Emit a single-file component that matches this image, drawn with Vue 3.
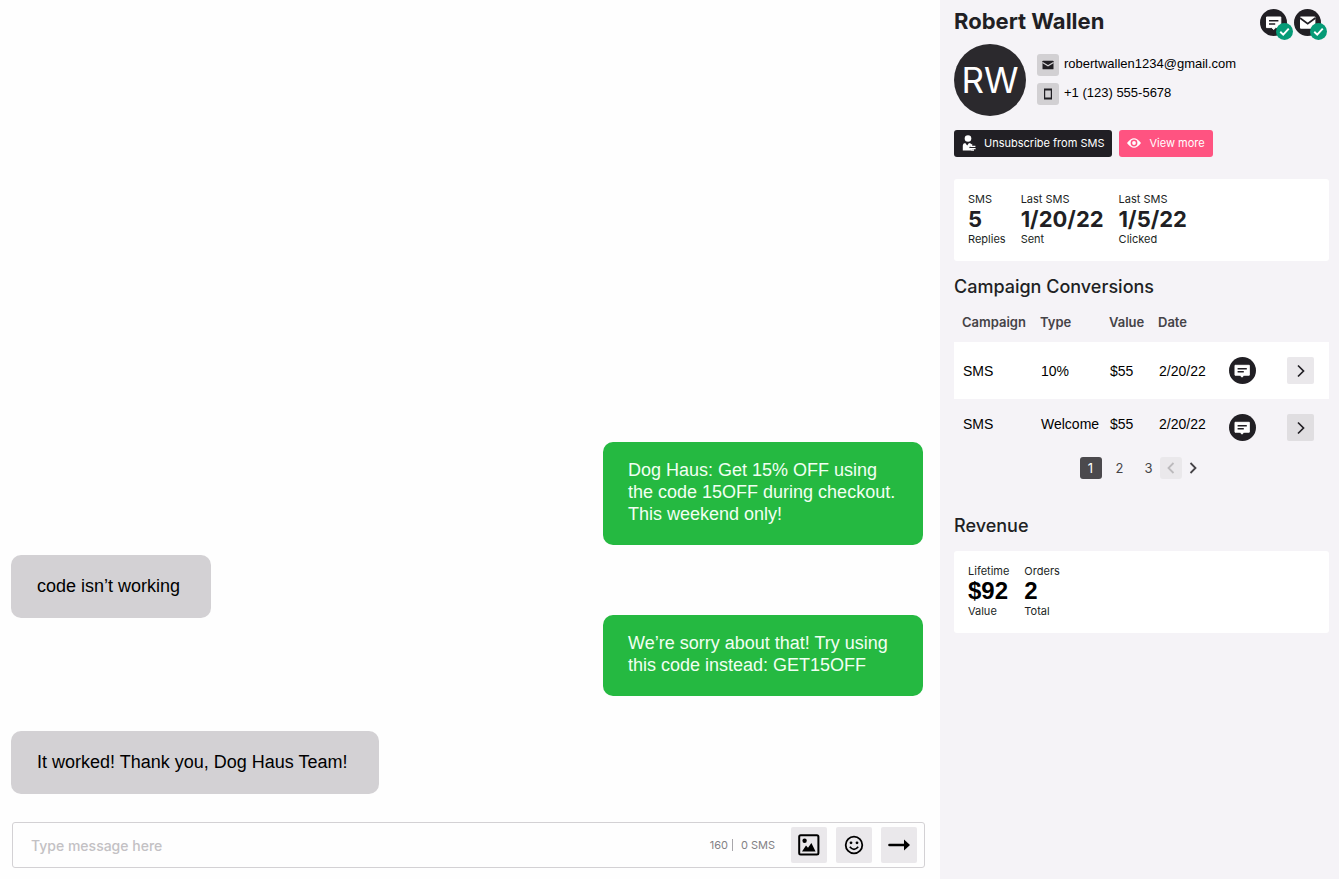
<script setup>
import { ref } from 'vue'

const draft = ref('')
const page = ref(1)

const messages = [
  { id: 1, from: 'store', text: 'Dog Haus: Get 15% OFF using the code 15OFF during checkout. This weekend only!' },
  { id: 2, from: 'customer', text: 'code isn’t working' },
  { id: 3, from: 'store', text: 'We’re sorry about that! Try using this code instead: GET15OFF' },
  { id: 4, from: 'customer', text: 'It worked! Thank you, Dog Haus Team!', late: true },
]

const smsStats = [
  { top: 'SMS', value: '5', bottom: 'Replies' },
  { top: 'Last SMS', value: '1/20/22', bottom: 'Sent' },
  { top: 'Last SMS', value: '1/5/22', bottom: 'Clicked' },
]

const revenueStats = [
  { top: 'Lifetime', value: '$92', bottom: 'Value' },
  { top: 'Orders', value: '2', bottom: 'Total' },
]

const conversions = [
  { id: 1, campaign: 'SMS', type: '10%', value: '$55', date: '2/20/22' },
  { id: 2, campaign: 'SMS', type: 'Welcome', value: '$55', date: '2/20/22' },
]
</script>

<template>
  <div class="layout">
    <main class="chat">
      <div class="messages">
        <p
          v-for="message in messages"
          :key="message.id"
          class="bubble"
          :class="[message.from, { late: message.late }]"
        >{{ message.text }}</p>
      </div>

      <form class="composer" @submit.prevent>
        <input v-model="draft" type="text" class="composer-input" placeholder="Type message here" aria-label="Type message here" />
        <div class="counter">
          <span>160</span>
          <span class="counter-sms">0 SMS</span>
        </div>
        <div class="composer-actions">
          <button type="button" class="tool-btn" aria-label="Add image">
            <svg width="22" height="22" viewBox="0 0 22 22">
              <rect x="1.2" y="1.2" width="19.2" height="19.2" rx="1.5" fill="none" stroke="currentColor" stroke-width="2" />
              <circle cx="6.6" cy="6.8" r="2.2" fill="currentColor" />
              <path d="M4 17.5 L8 11.5 L10 13.8 L13.4 9 L17.6 17.5 Z" fill="currentColor" />
            </svg>
          </button>
          <button type="button" class="tool-btn" aria-label="Add emoji">
            <svg width="20" height="20" viewBox="0 0 20 20">
              <circle cx="10" cy="10" r="8.3" fill="none" stroke="currentColor" stroke-width="1.8" />
              <circle cx="7" cy="7.8" r="1.4" fill="currentColor" />
              <circle cx="13" cy="7.8" r="1.4" fill="currentColor" />
              <path d="M5.8 11.8 Q10 17 14.2 11.8" fill="none" stroke="currentColor" stroke-width="1.7" />
            </svg>
          </button>
          <button type="submit" class="tool-btn" aria-label="Send">
            <svg width="24" height="14" viewBox="0 0 24 14">
              <path d="M2.5 7 H18" fill="none" stroke="currentColor" stroke-width="2.6" stroke-linecap="round" />
              <path d="M17 1.5 L23 7 L17 12.5 Z" fill="currentColor" />
            </svg>
          </button>
        </div>
      </form>
    </main>

    <aside class="profile">
      <header class="profile-head">
        <h1 class="name">Robert Wallen</h1>
        <div class="channels">
          <span class="channel">
            <svg class="channel-icon" viewBox="0 0 27 27">
              <circle cx="13.5" cy="13.5" r="13.5" fill="#211f24" />
              <path d="M6.5 8 H20.8 V18.6 H15.6 L13.7 20.6 L11.8 18.6 H6.5 Z" fill="#fff" stroke="#fff" stroke-width="1" stroke-linejoin="round" />
              <path d="M9 11.7 H18.4 M9 14.9 H15.2" stroke="#211f24" stroke-width="1.5" />
            </svg>
            <svg class="check" viewBox="0 0 16 16">
              <circle cx="8" cy="8" r="8" fill="#069b77" />
              <path d="M4 8.2 L6.8 11 L12 5.2" fill="none" stroke="#fff" stroke-width="1.8" />
            </svg>
          </span>
          <span class="channel">
            <svg class="channel-icon" viewBox="0 0 27 27">
              <circle cx="13.5" cy="13.5" r="13.5" fill="#211f24" />
              <rect x="6" y="7.5" width="15.4" height="12.2" rx="1" fill="#fff" />
              <path d="M6 9 L13.7 14.6 L21.4 9" fill="none" stroke="#211f24" stroke-width="1.7" />
            </svg>
            <svg class="check" viewBox="0 0 16 16">
              <circle cx="8" cy="8" r="8" fill="#069b77" />
              <path d="M4 8.2 L6.8 11 L12 5.2" fill="none" stroke="#fff" stroke-width="1.8" />
            </svg>
          </span>
        </div>
      </header>

      <section class="contact">
        <div class="avatar">RW</div>
        <ul class="contact-list">
          <li>
            <span class="contact-icon">
              <svg width="12" height="10" viewBox="0 0 12 10">
                <rect x="0.5" y="0.7" width="11" height="8.6" rx="0.6" fill="#211f24" />
                <path d="M0.5 2.4 L6 5.8 L11.5 2.4" fill="none" stroke="#d2d0d3" stroke-width="1.2" />
              </svg>
            </span>
            robertwallen1234@gmail.com
          </li>
          <li>
            <span class="contact-icon">
              <svg width="10" height="12" viewBox="0 0 10 12">
                <path d="M1 0.5 H9 V11.5 H1 Z M2.2 2.4 V9.6 H7.8 V2.4 Z" fill="#211f24" fill-rule="evenodd" />
              </svg>
            </span>
            +1 (123) 555-5678
          </li>
        </ul>
      </section>

      <div class="actions">
        <button type="button" class="btn btn-dark">
          <svg width="14" height="16" viewBox="0 0 14 16">
            <circle cx="6" cy="3.5" r="3.3" fill="#fff" />
            <path d="M0.8 15.5 V10.5 Q0.8 8.2 3.2 8 L5.2 10.6 L7 8 Q9 8.2 9.8 9.4 L7 12 L9.2 15.5 Z" fill="#fff" />
            <path d="M7.4 12 L9.6 10 V11.4 H13.4 M13.6 13.6 H8.2 L9.6 15.2 H12" fill="none" stroke="#fff" stroke-width="1.2" />
          </svg>
          Unsubscribe from SMS
        </button>
        <button type="button" class="btn btn-pink">
          <svg width="14" height="12" viewBox="0 0 14 12">
            <path d="M0 6 Q7 -3.6 14 6 Q7 15.6 0 6 Z" fill="#fff" />
            <circle cx="7" cy="6" r="3.4" fill="#ff5381" />
            <circle cx="7" cy="6" r="1.9" fill="#fff" />
          </svg>
          View more
        </button>
      </div>

      <dl class="card">
        <div v-for="stat in smsStats" :key="stat.bottom" class="stat">
          <dt>{{ stat.top }}</dt>
          <dd class="stat-value">{{ stat.value }}</dd>
          <dd>{{ stat.bottom }}</dd>
        </div>
      </dl>

      <h2 class="section-title">Campaign Conversions</h2>
      <table class="conversions">
        <colgroup>
          <col class="col-campaign" />
          <col class="col-type" />
          <col class="col-value" />
          <col class="col-date" />
          <col />
          <col />
        </colgroup>
        <thead>
          <tr>
            <th>Campaign</th>
            <th>Type</th>
            <th>Value</th>
            <th>Date</th>
            <th></th>
            <th></th>
          </tr>
        </thead>
        <tbody>
          <tr v-for="row in conversions" :key="row.id">
            <td class="text-cell">{{ row.campaign }}</td>
            <td class="text-cell">{{ row.type }}</td>
            <td class="text-cell">{{ row.value }}</td>
            <td class="text-cell">{{ row.date }}</td>
            <td class="icon-cell">
              <svg class="channel-icon" viewBox="0 0 27 27">
                <circle cx="13.5" cy="13.5" r="13.5" fill="#211f24" />
                <path d="M6 8.3 H20.3 V18.2 H15 L13 20.2 L11 18.2 H6 Z" fill="#fff" stroke="#fff" stroke-width="1" stroke-linejoin="round" />
                <path d="M8.6 11.8 H17.8 M8.6 14.7 H14.8" stroke="#211f24" stroke-width="1.4" />
              </svg>
            </td>
            <td class="open-cell">
              <button type="button" class="open-btn" aria-label="Open conversion">
                <svg width="8" height="14" viewBox="0 0 8 14">
                  <path d="M1 1.5 L6.5 7 L1 12.5" fill="none" stroke="currentColor" stroke-width="1.7" />
                </svg>
              </button>
            </td>
          </tr>
        </tbody>
      </table>

      <nav class="pager" aria-label="Conversions pages">
        <div class="pages">
          <button
            v-for="n in 3"
            :key="n"
            type="button"
            class="page-btn"
            :class="{ active: page === n }"
            @click="page = n"
          >{{ n }}</button>
        </div>
        <button type="button" class="step-btn" :disabled="page === 1" aria-label="Previous page" @click="page--">
          <svg width="8" height="12" viewBox="0 0 8 12">
            <path d="M6.5 1 L1.5 6 L6.5 11" fill="none" stroke="currentColor" stroke-width="1.8" />
          </svg>
        </button>
        <button type="button" class="step-btn" :disabled="page === 3" aria-label="Next page" @click="page++">
          <svg width="8" height="12" viewBox="0 0 8 12">
            <path d="M1.5 1 L6.5 6 L1.5 11" fill="none" stroke="currentColor" stroke-width="1.8" />
          </svg>
        </button>
      </nav>

      <h2 class="section-title">Revenue</h2>
      <dl class="card revenue">
        <div v-for="stat in revenueStats" :key="stat.bottom" class="stat">
          <dt>{{ stat.top }}</dt>
          <dd class="stat-value">{{ stat.value }}</dd>
          <dd>{{ stat.bottom }}</dd>
        </div>
      </dl>
    </aside>
  </div>
</template>

<style>
body {
  margin: 0;
}
</style>

<style scoped>
.layout {
  display: grid;
  grid-template-columns: minmax(0, 1fr) 399px;
  min-height: 100vh;
  background: #fefefe;
  color: #211f24;
  font-family: Inter, sans-serif;
}

button {
  display: flex;
  align-items: center;
  justify-content: center;
  padding: 0;
  border: 0;
  font-family: inherit;
  cursor: pointer;
}

svg {
  display: block;
  flex: none;
}

.chat {
  display: flex;
  flex-direction: column;
  justify-content: flex-end;
  gap: 28px;
  box-sizing: border-box;
  padding: 11px 15px 11px 12px;
}

.messages {
  display: flex;
  flex-direction: column;
  margin: 0 2px 0 -1px;
}

.bubble {
  box-sizing: border-box;
  max-width: 380px;
  margin: 0;
  border-radius: 10px;
  font: 18px/22px "Liberation Sans", Arial, sans-serif;
}

.store {
  align-self: flex-end;
  width: 320px;
  margin-top: -3px;
  padding: 17px 25px 20px;
  background: #25b941;
  color: #f1fff2;
}

.customer {
  align-self: flex-start;
  margin-top: 10px;
  padding: 20px 31px 21px 26px;
  background: #d3d1d4;
  color: #000;
}

.late {
  margin-top: 35px;
}

.composer {
  display: flex;
  align-items: center;
  box-sizing: border-box;
  height: 46px;
  padding: 0 7px 0 18px;
  border: 1px solid #d3d1d4;
  border-radius: 3px;
}

.composer-input {
  flex: 1;
  min-width: 0;
  padding: 1px 0 0;
  border: 0;
  outline: 0;
  background: none;
  color: #211f24;
  font: 500 14px/20px Inter, sans-serif;
}

.composer-input::placeholder {
  color: #c3c1c4;
  opacity: 1;
}

.counter {
  display: flex;
  color: #838185;
  font-size: 11px;
  line-height: 12px;
}

.counter-sms {
  margin-left: 4px;
  padding-left: 8px;
  border-left: 1px solid #a9a7ab;
}

.composer-actions {
  display: flex;
  gap: 9px;
  margin-left: 16px;
}

.tool-btn {
  width: 36px;
  height: 36px;
  border-radius: 2px;
  background: #eae8eb;
  color: #000;
}

.profile {
  box-sizing: border-box;
  padding: 8px 10px 20px 14px;
  background: #f5f3f7;
}

.profile-head {
  display: flex;
  justify-content: space-between;
  height: 36px;
}

.name {
  margin: 0;
  font-size: 22px;
  font-weight: 700;
  line-height: 26px;
}

.channels {
  display: flex;
  gap: 7px;
  margin: 1px 8px 0 0;
}

.channel {
  position: relative;
  width: 27px;
  height: 27px;
}

.channel-icon {
  width: 27px;
  height: 27px;
}

.check {
  position: absolute;
  right: -6px;
  bottom: -4px;
  width: 17px;
  height: 17px;
}

.contact {
  display: flex;
  gap: 11px;
}

.avatar {
  display: flex;
  align-items: center;
  justify-content: center;
  width: 72px;
  height: 72px;
  border-radius: 50%;
  background: #2b292d;
  color: #fff;
  font-size: 35px;
  line-height: 44px;
}

.contact-list {
  display: grid;
  align-content: start;
  gap: 7px;
  margin: 0;
  padding: 10px 0 0;
  list-style: none;
  color: #000;
  font: 13px/20px "Liberation Sans", Arial, sans-serif;
}

.contact-list li {
  display: flex;
  gap: 5px;
}

.contact-icon {
  display: flex;
  align-items: center;
  justify-content: center;
  width: 22px;
  height: 22px;
  border-radius: 3px;
  background: #d2d0d3;
}

.actions {
  display: flex;
  gap: 7px;
  margin: 14px 0 22px;
}

.btn {
  gap: 8px;
  height: 27px;
  padding: 0 8px 1px;
  border-radius: 3px;
  color: #fff;
  font-size: 11px;
}

.btn-dark {
  background: #211f24;
}

.btn-pink {
  background: #ff5381;
}

.card {
  display: flex;
  gap: 15px;
  box-sizing: border-box;
  height: 82px;
  margin: 0;
  padding: 13px 14px;
  border-radius: 3px;
  background: #fff;
  font-size: 11px;
  line-height: 14px;
}

.card dd {
  margin: 0;
}

.card .stat-value {
  font-size: 22px;
  font-weight: 700;
  line-height: 26px;
}

.revenue .stat-value {
  color: #000;
  font-family: "Liberation Sans", Arial, sans-serif;
  font-size: 24px;
}

.section-title {
  margin: 13px 0 12px;
  font-size: 18px;
  font-weight: 500;
  line-height: 26px;
}

.conversions {
  width: 100%;
  border-collapse: collapse;
  table-layout: fixed;
}

.col-campaign {
  width: 78px;
}

.col-type {
  width: 69px;
}

.col-value {
  width: 49px;
}

.col-date {
  width: 79px;
}

.conversions th {
  height: 28px;
  padding: 2px 0 0 8px;
  color: #454347;
  font-size: 13px;
  font-weight: 600;
  text-align: left;
  vertical-align: top;
}

.conversions td {
  height: 57px;
  padding: 0;
  color: #000;
}

.conversions .text-cell {
  padding-left: 9px;
  font: 14px/20px "Liberation Sans", Arial, sans-serif;
  white-space: nowrap;
}

.conversions tbody tr:nth-child(odd) {
  background: #fff;
}

.conversions tbody tr:nth-child(even) .text-cell {
  height: 49px;
  padding-bottom: 8px;
}

.open-cell .open-btn {
  width: 27px;
  height: 27px;
  margin: 0 15px 0 auto;
  border-radius: 2px;
  background: #eae8eb;
  color: #211f24;
}

.conversions tbody tr:nth-child(even) .open-btn {
  background: #e0dee1;
}

.pager {
  display: flex;
  justify-content: center;
  margin: 1px 0 34px;
}

.pages {
  display: flex;
  gap: 7px;
}

.page-btn,
.step-btn {
  width: 22px;
  height: 22px;
  border-radius: 3px;
  background: none;
  color: #454347;
  font-size: 13px;
}

.page-btn.active {
  background: #4b494d;
  color: #fff;
}

.step-btn:disabled {
  background: #eae8eb;
  color: #bcbabd;
}
</style>
